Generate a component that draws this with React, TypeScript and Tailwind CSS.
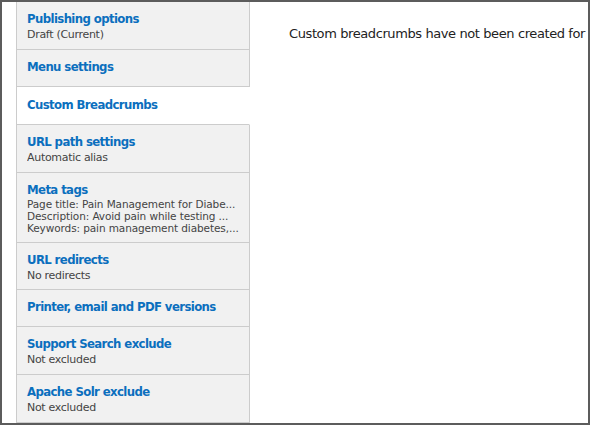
import React from "react";

type Tab = {
  title: string;
  summary?: string[];
  active?: boolean;
  small?: boolean;
  tight?: boolean;
};

const tabs: Tab[] = [
  { title: "Publishing options", summary: ["Draft (Current)"] },
  { title: "Menu settings" },
  { title: "Custom Breadcrumbs", active: true },
  { title: "URL path settings", summary: ["Automatic alias"] },
  {
    title: "Meta tags",
    small: true,
    summary: [
      "Page title: Pain Management for Diabe...",
      "Description: Avoid pain while testing ...",
      "Keywords: pain management diabetes,...",
    ],
  },
  { title: "URL redirects", summary: ["No redirects"], tight: true },
  { title: "Printer, email and PDF versions" },
  { title: "Support Search exclude", summary: ["Not excluded"] },
  { title: "Apache Solr exclude", summary: ["Not excluded"] },
];

function TabItem({ tab }: { tab: Tab }) {
  const pad = tab.active
    ? "pt-[10px] pb-[11px]"
    : tab.small
      ? "pt-[9px] pb-[8px]"
      : tab.summary
        ? tab.tight
          ? "pt-[9px] pb-[6px]"
          : "pt-[9px] pb-[7px]"
        : "pt-[9px] pb-[11px]";
  return (
    <li
      className={
        "border-b border-[#cccccc] pl-[10px] pr-2 " +
        pad +
        " " +
        (tab.active ? "bg-white border-r border-r-white" : "bg-[#f1f1f1] border-r border-r-[#cccccc]")
      }
    >
      <div
        className="text-[13px] leading-[16px] font-bold text-[#0b6fbe] tracking-[-0.6px] whitespace-nowrap"
        style={{ fontFamily: '"DejaVu Sans Condensed", "DejaVu Sans", sans-serif' }}
      >
        {tab.title}
      </div>
      {tab.summary && (
        <div className={tab.small ? "" : "mt-px"}>
          {tab.summary.map((line) => (
            <div
              key={line}
              className={
                "text-[#444444] whitespace-nowrap overflow-hidden " +
                (tab.small
                  ? "text-[10.5px] leading-[12px] tracking-[-0.1px]"
                  : "text-[11px] leading-[14px] tracking-[-0.3px]")
              }
            >
              {line}
            </div>
          ))}
        </div>
      )}
    </li>
  );
}

export default function App() {
  return (
    <div
      className="w-[590px] h-[425px] border-2 border-[#5c5c5c] bg-white overflow-hidden flex pl-[14px]"
      style={{ fontFamily: '"DejaVu Sans", "Liberation Sans", sans-serif' }}
    >
      <ul className="w-[234px] shrink-0 border-l border-[#cccccc] bg-[#f1f1f1]">
        {tabs.map((t) => (
          <TabItem key={t.title} tab={t} />
        ))}
      </ul>
      <div className="flex-1 min-w-0 pl-[39px] pt-[24px]">
        <p className="text-[13px] leading-[16px] text-[#222222] whitespace-nowrap tracking-[-0.4px]">
          Custom breadcrumbs have not been created for
        </p>
      </div>
    </div>
  );
}
